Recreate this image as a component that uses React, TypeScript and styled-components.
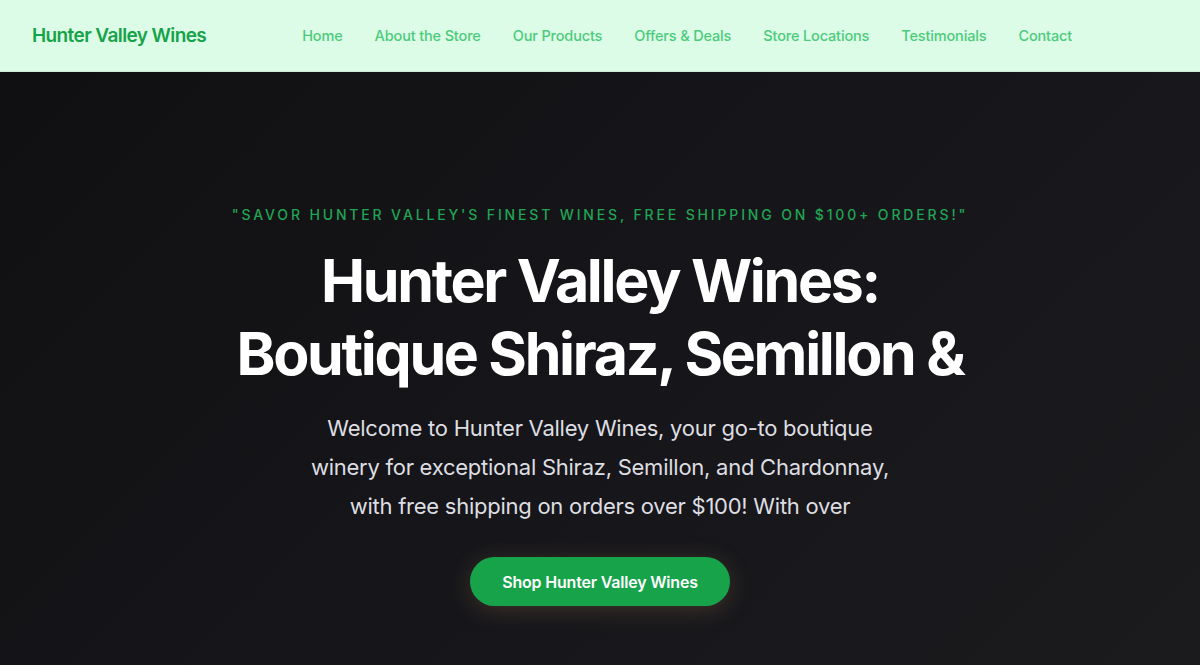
import React from "react";
import styled, { createGlobalStyle } from "styled-components";

const Global = createGlobalStyle`
  html, body { margin: 0; padding: 0; }
  body {
    font-family: Inter, "Noto Sans", "Liberation Sans", sans-serif;
    background: #131315;
    -webkit-font-smoothing: antialiased;
  }
  * { box-sizing: border-box; }
`;

const Page = styled.div`
  min-height: 665px;
  display: flex;
  flex-direction: column;
`;

const Header = styled.header`
  height: 72px;
  background: #dcfce7;
  border-bottom: 1px solid #cfe9d6;
  display: flex;
  align-items: center;
  padding: 0 32px;
`;

const Logo = styled.a`
  font-size: 19px;
  font-weight: 600;
  color: #16a34a;
  letter-spacing: -0.6px;
  text-decoration: none;
  margin-right: 96px;
  white-space: nowrap;
`;

const Nav = styled.nav`
  display: flex;
  gap: 32px;
`;

const NavLink = styled.a`
  font-size: 14.5px;
  font-weight: 500;
  letter-spacing: -0.15px;
  color: #4ccb7c;
  text-decoration: none;
  white-space: nowrap;
`;

const Hero = styled.section`
  flex: 1;
  min-height: 593px;
  background: linear-gradient(135deg, #101012 0%, #16161a 50%, #1b1b1e 100%);
  display: flex;
  flex-direction: column;
  align-items: center;
  padding-top: 133px;
  text-align: center;
`;

const Tagline = styled.p`
  margin: 0;
  font-size: 14px;
  font-weight: 500;
  letter-spacing: 2.85px;
  text-transform: uppercase;
  color: #22a455;
  line-height: 20px;
`;

const Title = styled.h1`
  margin: 19px 0 0;
  max-width: 768px;
  font-size: 59px;
  font-weight: 700;
  line-height: 73px;
  letter-spacing: -2.3px;
  color: #ffffff;
`;

const Lead = styled.p`
  margin: 19px 0 0;
  max-width: 600px;
  font-size: 22px;
  font-weight: 400;
  line-height: 39px;
  color: #dedee2;
  letter-spacing: -0.25px;
`;

const Button = styled.a`
  margin-top: 31px;
  width: 260px;
  height: 49px;
  border-radius: 999px;
  background: #16a34a;
  color: #ffffff;
  font-size: 16px;
  font-weight: 600;
  letter-spacing: -0.2px;
  display: flex;
  align-items: center;
  justify-content: center;
  text-decoration: none;
  box-shadow: 0 4px 22px rgba(160, 120, 80, 0.28);
`;

const links = [
  "Home",
  "About the Store",
  "Our Products",
  "Offers & Deals",
  "Store Locations",
  "Testimonials",
  "Contact",
];

export default function App() {
  return (
    <Page>
      <Global />
      <Header>
        <Logo href="#">Hunter Valley Wines</Logo>
        <Nav>
          {links.map((l) => (
            <NavLink key={l} href="#">
              {l}
            </NavLink>
          ))}
        </Nav>
      </Header>
      <Hero>
        <Tagline>"Savor Hunter Valley's finest wines, free shipping on $100+ orders!"</Tagline>
        <Title>Hunter Valley Wines: Boutique Shiraz, Semillon &amp;</Title>
        <Lead>
          Welcome to Hunter Valley Wines, your go-to boutique winery for exceptional Shiraz,
          Semillon, and Chardonnay, with free shipping on orders over $100! With over
        </Lead>
        <Button href="#">Shop Hunter Valley Wines</Button>
      </Hero>
    </Page>
  );
}
